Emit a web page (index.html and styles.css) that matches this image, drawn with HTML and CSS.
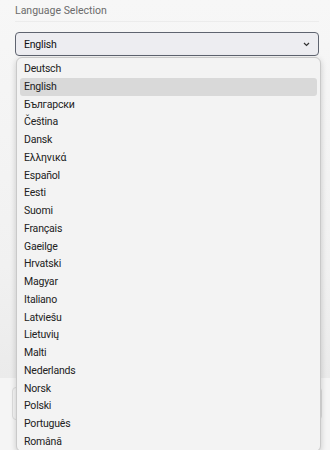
FILE: index.html
```html
<!DOCTYPE html>
<html lang="en">
<head>
  <meta charset="UTF-8" />
  <title>Language Selection</title>
  <link rel="stylesheet" href="styles.css">
</head>
<body>
  <div class="page">
    <section class="panel">
      <h2 class="title">Language Selection</h2>
      <div class="picker">
        <div class="select">
          <span>English</span>
          <svg class="chevron" width="7" height="5" viewBox="0 0 7 5"><path d="M1 1 L3.5 3.5 L6 1" fill="none" stroke="#333" stroke-width="1.2"/></svg>
        </div>
        <ul class="options">
          <li>Deutsch</li>
          <li class="selected">English</li>
          <li>Български</li>
          <li>Čeština</li>
          <li>Dansk</li>
          <li>Ελληνικά</li>
          <li>Español</li>
          <li>Eesti</li>
          <li>Suomi</li>
          <li>Français</li>
          <li>Gaeilge</li>
          <li>Hrvatski</li>
          <li>Magyar</li>
          <li>Italiano</li>
          <li>Latviešu</li>
          <li>Lietuvių</li>
          <li>Malti</li>
          <li>Nederlands</li>
          <li>Norsk</li>
          <li>Polski</li>
          <li>Português</li>
          <li>Română</li>
        </ul>
      </div>
    </section>
    <div class="footer-box"></div>
  </div>
</body>
</html>
```

FILE: styles.css
```css
* {
  margin: 0;
  padding: 0;
  box-sizing: border-box;
}

body {
  font-family: Roboto, "Noto Sans", sans-serif;
  background-color: #f5f5f5;
  color: #1a1a1a;
  overflow: hidden;
}

.page {
  width: 330px;
  height: 450px;
}

.panel {
  height: 378px;
  padding: 0 11px 0 15px;
  background: linear-gradient(to bottom, #f7f7f7 0%, #f1f1f1 70%, #ebebeb 100%);
}

.title {
  font-size: 10.5px;
  font-weight: 400;
  color: #6b6b6b;
  height: 22px;
  padding-top: 4px;
  border-bottom: 1px solid #ececec;
  margin-bottom: 10px;
}

.picker {
  position: relative;
}

.select {
  height: 24px;
  width: 304px;
  border: 1px solid #5f6470;
  border-radius: 4px;
  background-color: #ededf1;
  display: flex;
  align-items: center;
  justify-content: space-between;
  padding: 0 8px 0 8px;
  font-size: 10.5px;
  letter-spacing: -0.2px;
  color: #111;
}

.chevron {
  display: block;
}

.options {
  position: absolute;
  top: 25px;
  left: 1px;
  width: 305px;
  list-style: none;
  background-color: #f3f3f3;
  border: 1px solid #c9c9c9;
  border-radius: 6px;
  box-shadow: 0 2px 6px rgba(0, 0, 0, 0.18);
  padding: 2px 3px 0;
  z-index: 2;
}

.options li {
  height: 17.76px;
  line-height: 17.76px;
  padding-left: 4px;
  font-size: 10.5px;
  letter-spacing: -0.2px;
  color: #222;
  border-radius: 3px;
}

.options li.selected {
  background-color: #d9d9d9;
}

.footer-box {
  margin: 9px 8px 0 12px;
  height: 33px;
  border: 1px solid #dcdcdc;
  border-radius: 4px;
  background-color: #f4f4f4;
}
```
